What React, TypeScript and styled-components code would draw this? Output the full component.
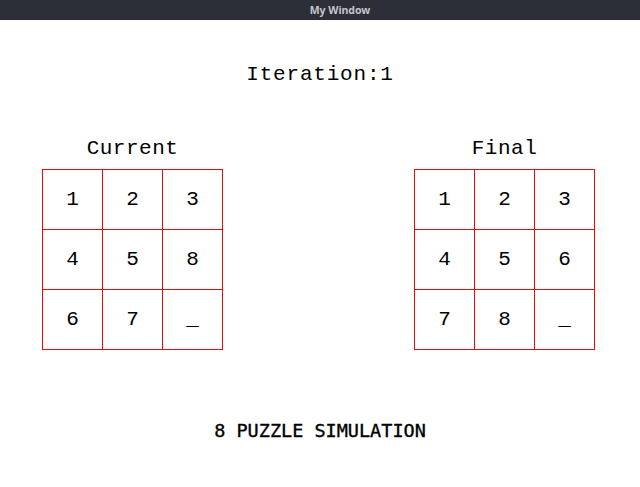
import React from "react";
import styled, { createGlobalStyle } from "styled-components";

const GlobalStyle = createGlobalStyle`
  html, body {
    margin: 0;
    padding: 0;
    background: #ffffff;
  }
  body {
    width: 640px;
    height: 487px;
    overflow: hidden;
  }
`;

const Window = styled.div`
  width: 640px;
  height: 487px;
  display: flex;
  flex-direction: column;
  background: #ffffff;
`;

const TitleBar = styled.div`
  height: 20px;
  flex: none;
  background: #2d2f38;
  display: flex;
  align-items: center;
  justify-content: center;
  padding-left: 40px;
  font-family: "Noto Sans", "DejaVu Sans", sans-serif;
  font-weight: 700;
  font-size: 10.5px;
  color: #c4c6cc;
`;

const Canvas = styled.div`
  flex: 1;
  display: flex;
  flex-direction: column;
  padding-top: 44px;
  font-family: "Liberation Mono", "DejaVu Sans Mono", monospace;
  color: #000000;
`;

const Heading = styled.div`
  font-size: 21px;
  line-height: 21px;
  letter-spacing: 0.8px;
  text-align: center;
`;

const Boards = styled.div`
  display: flex;
  justify-content: space-between;
  padding: 0 45px 0 42px;
  margin-top: 53px;
`;

const Panel = styled.div`
  display: flex;
  flex-direction: column;
  align-items: center;
  gap: 10px;
`;

const Label = styled.div`
  font-size: 21px;
  line-height: 21px;
  letter-spacing: 0.5px;
`;

const Grid = styled.div`
  display: grid;
  grid-template-columns: repeat(3, 59px);
  grid-template-rows: repeat(3, 59px);
  gap: 1px;
  padding: 1px;
  background: #ff0000;
`;

const Cell = styled.div`
  background: #ffffff;
  display: flex;
  align-items: center;
  justify-content: center;
  font-size: 21px;
  line-height: 21px;
`;

const Footer = styled.div`
  margin-top: 71px;
  font-family: "DejaVu Sans Mono", "Liberation Mono", monospace;
  font-size: 18.5px;
  line-height: 20px;
  font-weight: 400;
  -webkit-text-stroke: 0.35px #000000;
  text-align: center;
`;

const current = ["1", "2", "3", "4", "5", "8", "6", "7", "_"];
const finalState = ["1", "2", "3", "4", "5", "6", "7", "8", "_"];

const Board: React.FC<{ label: string; tiles: string[] }> = ({ label, tiles }) => (
  <Panel>
    <Label>{label}</Label>
    <Grid>
      {tiles.map((t, i) => (
        <Cell key={i}>{t}</Cell>
      ))}
    </Grid>
  </Panel>
);

export default function App() {
  return (
    <>
      <GlobalStyle />
      <Window>
        <TitleBar>My Window</TitleBar>
        <Canvas>
          <Heading>Iteration:1</Heading>
          <Boards>
            <Board label="Current" tiles={current} />
            <Board label="Final" tiles={finalState} />
          </Boards>
          <Footer>8 PUZZLE SIMULATION</Footer>
        </Canvas>
      </Window>
    </>
  );
}
